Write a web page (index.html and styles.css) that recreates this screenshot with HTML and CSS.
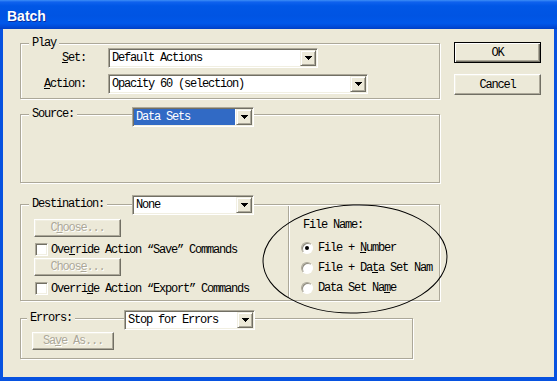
FILE: index.html
```html
<!DOCTYPE html>
<html>
<head>
<meta charset="utf-8">
<title>Batch</title>
<link rel="stylesheet" href="styles.css">
</head>
<body>
<div class="window">
  <div class="titlebar"><span class="title">Batch</span></div>
  <div class="client">
    <div class="main">
      <div class="group play">
        <div class="ghead"><span class="legend">Play</span></div>
        <div class="play-grid">
          <span class="flabel"><u>S</u>et:</span>
          <div class="combo w-set"><span class="ctext">Default Actions</span><span class="dd"><svg width="7" height="4" viewBox="0 0 7 4"><path d="M0 0h7v1H0zM1 1h5v1H1zM2 2h3v1H2zM3 3h1v1H3z"/></svg></span></div>
          <span class="flabel"><u>A</u>ction:</span>
          <div class="combo w-action"><span class="ctext">Opacity 60 (selection)</span><span class="dd"><svg width="7" height="4" viewBox="0 0 7 4"><path d="M0 0h7v1H0zM1 1h5v1H1zM2 2h3v1H2zM3 3h1v1H3z"/></svg></span></div>
        </div>
      </div>

      <div class="group source">
        <div class="ghead head-source">
          <span class="legend leg-source">Source:</span>
          <div class="combo w-src"><span class="ctext selected">Data Sets</span><span class="dd"><svg width="7" height="4" viewBox="0 0 7 4"><path d="M0 0h7v1H0zM1 1h5v1H1zM2 2h3v1H2zM3 3h1v1H3z"/></svg></span></div>
        </div>
      </div>

      <div class="group dest">
        <div class="ghead head-dest">
          <span class="legend leg-dest">Destination:</span>
          <div class="combo w-dest"><span class="ctext">None</span><span class="dd"><svg width="7" height="4" viewBox="0 0 7 4"><path d="M0 0h7v1H0zM1 1h5v1H1zM2 2h3v1H2zM3 3h1v1H3z"/></svg></span></div>
        </div>
        <div class="dest-body">
          <div class="dest-left">
            <div class="btn disabled w-choose first">C<u>h</u>oose...</div>
            <div class="check-row gap-a"><span class="checkbox"></span><span>Ove<u>r</u>ride Action “Save” Commands</span></div>
            <div class="btn disabled w-choose gap-b">Choos<u>e</u>...</div>
            <div class="check-row gap-a"><span class="checkbox"></span><span>Overri<u>d</u>e Action “Export” Commands</span></div>
          </div>
          <div class="dest-right">
            <div class="fn-label">File Name:</div>
            <div class="radio-row first"><span class="radio checked"></span><span>File + <u>N</u>umber</span></div>
            <div class="radio-row"><span class="radio"></span><span>File + Da<u>t</u>a Set Nam</span></div>
            <div class="radio-row"><span class="radio"></span><span>Data Set Na<u>m</u>e</span></div>
          </div>
        </div>
      </div>

      <div class="group errors">
        <div class="ghead head-err">
          <span class="legend leg-err">Errors:</span>
          <div class="combo w-err"><span class="ctext">Stop for Errors</span><span class="dd"><svg width="7" height="4" viewBox="0 0 7 4"><path d="M0 0h7v1H0zM1 1h5v1H1zM2 2h3v1H2zM3 3h1v1H3z"/></svg></span></div>
        </div>
        <div class="btn disabled w-save">Sa<u>v</u>e As...</div>
      </div>
    </div>

    <div class="side">
      <div class="btn default w-side">OK</div>
      <div class="btn w-side">Cancel</div>
    </div>

    <svg class="annot" width="192" height="114" viewBox="0 0 192 114">
      <ellipse cx="95" cy="57" rx="92" ry="54" fill="none" stroke="#000" stroke-width="1" transform="rotate(-2 95 57)"/>
    </svg>
  </div>
</div>
</body>
</html>
```

FILE: styles.css
```css
html, body {
  margin: 0;
  padding: 0;
}
body {
  width: 557px;
  height: 381px;
  overflow: hidden;
  font-family: "Liberation Mono", "DejaVu Sans Mono", monospace;
  font-size: 12px;
  letter-spacing: -1.2px;
  line-height: 12px;
  color: #000;
}
u { text-decoration: underline; text-underline-offset: 1px; }

.window {
  width: 557px;
  height: 381px;
  background: #0752E0;
  display: flex;
  flex-direction: column;
  box-sizing: border-box;
}
.titlebar {
  height: 29px;
  flex: none;
  box-sizing: border-box;
  padding: 3px 0 0 7px;
  display: flex;
  align-items: center;
  background: linear-gradient(to bottom, #3D8EF6 0%, #0F62EE 7%, #0057E6 20%, #0054E3 55%, #0058EA 80%, #0049D6 93%, #003FC4 100%);
}
.title {
  font: bold 14px "Liberation Sans", Arial, sans-serif;
  letter-spacing: 0;
  color: #fff;
  text-shadow: 1px 1px #0A2C9E;
}
.client {
  flex: 1;
  margin: 0 3px 4px 3px;
  background: #ECE9D8;
  display: flex;
  position: relative;
}
.main {
  margin-left: 17px;
  width: 420px;
  flex: none;
}
.side {
  margin-left: 14px;
  padding-top: 13px;
  display: flex;
  flex-direction: column;
  gap: 11px;
}

/* group boxes */
.group {
  box-sizing: border-box;
  border: 1px solid #ACA899;
  box-shadow: inset 1px 1px #fff, 1px 1px #fff;
}
.ghead {
  display: flex;
  align-items: flex-start;
}
.legend {
  background: #ECE9D8;
  padding: 0 3px;
  margin-left: 8px;
  line-height: 12px;
  white-space: nowrap;
}

.play {
  margin-top: 14px;
  height: 56px;
}
.play .ghead {
  height: 12px;
  margin-top: -7px;
}
.play-grid {
  display: grid;
  grid-template-columns: 65px auto;
  column-gap: 22px;
  row-gap: 6px;
  align-items: center;
  justify-items: start;
  margin-top: -1px;
}
.flabel {
  justify-self: end;
  white-space: nowrap;
}

.source {
  margin-top: 15px;
  height: 69px;
}
.head-source { margin-top: -8px; }
.leg-source { margin-top: 1px; }
.w-src { margin-left: 55px; width: 122px; }

.dest {
  margin-top: 21px;
  height: 97px;
  display: flex;
  flex-direction: column;
}
.head-dest { margin-top: -10px; }
.leg-dest { margin-top: 3px; }
.w-dest { margin-left: 25px; width: 122px; }

.dest-body {
  flex: 1;
  display: flex;
}
.dest-left {
  width: 267px;
  box-sizing: border-box;
  padding-left: 13px;
  display: flex;
  flex-direction: column;
  align-items: flex-start;
}
.dest-left .first { margin-top: 4px; }
.gap-a { margin-top: 6px; }
.gap-b { margin-top: 2px; }
.dest-right {
  flex: 1;
  margin-top: -9px;
  margin-bottom: 3px;
  border-left: 1px solid #ACA899;
  box-shadow: inset 1px 0 #fff;
  padding: 13px 0 0 12px;
}
.fn-label { margin-left: 2px; white-space: nowrap; }
.radio-row {
  display: flex;
  align-items: center;
  height: 13px;
  margin-top: 7px;
  white-space: nowrap;
}
.radio-row.first { margin-top: 10px; }
.radio {
  width: 12px;
  height: 12px;
  box-sizing: border-box;
  border-radius: 50%;
  background: #fff;
  border: 1px solid;
  border-color: #ACA899 #fff #fff #ACA899;
  box-shadow: inset 1px 1px #8F8C7E;
  margin-right: 5px;
  display: flex;
  align-items: center;
  justify-content: center;
  flex: none;
}
.radio.checked::after {
  content: "";
  width: 4px;
  height: 4px;
  border-radius: 50%;
  background: #000;
}

.errors {
  margin-top: 17px;
  width: 393px;
  height: 41px;
}
.head-err { margin-top: -9px; }
.leg-err { margin-top: 2px; margin-left: 6px; }
.w-err { margin-left: 49px; width: 131px; }

/* combo boxes */
.combo {
  box-sizing: border-box;
  height: 20px;
  padding: 1px;
  background: #fff;
  border: 1px solid;
  border-color: #ACA899 #fff #fff #ACA899;
  box-shadow: inset 1px 1px #716F64, inset -1px -1px #F1EFE2;
  display: flex;
  flex: none;
}
.w-set { width: 210px; }
.w-action { width: 260px; }
.ctext {
  flex: 1;
  padding-left: 2px;
  margin-right: 1px;
  line-height: 16px;
  white-space: nowrap;
  overflow: hidden;
}
.ctext.selected {
  background: #316AC5;
  color: #fff;
}
.dd {
  width: 16px;
  height: 16px;
  box-sizing: border-box;
  flex: none;
  background: #ECE9D8;
  border: 1px solid;
  border-color: #F1EFE2 #716F64 #716F64 #F1EFE2;
  box-shadow: inset 1px 1px #fff, inset -1px -1px #ACA899;
  display: flex;
  align-items: center;
  justify-content: center;
}
.dd svg { display: block; fill: #000; shape-rendering: crispEdges; }

/* buttons */
.btn {
  box-sizing: border-box;
  background: #ECE9D8;
  border: 1px solid;
  border-color: #fff #716F64 #716F64 #fff;
  box-shadow: inset -1px -1px #ACA899, inset 1px 1px #F1EFE2;
  display: flex;
  align-items: center;
  justify-content: center;
  white-space: nowrap;
  flex: none;
}
.btn.default {
  border: 1px solid #000;
  box-shadow: inset 1px 1px #fff, inset -1px -1px #716F64, inset -2px -2px #ACA899;
}
.btn.disabled {
  color: #ACA899;
  text-shadow: 1px 1px #fff;
}
.w-side { width: 87px; height: 21px; }
.w-choose { width: 87px; height: 18px; }
.w-save { width: 82px; height: 18px; margin: 2px 0 0 11px; }

/* checkboxes */
.check-row {
  display: flex;
  align-items: center;
  height: 13px;
  white-space: nowrap;
}
.checkbox {
  width: 13px;
  height: 13px;
  box-sizing: border-box;
  background: #fff;
  border: 1px solid;
  border-color: #ACA899 #fff #fff #ACA899;
  box-shadow: inset 1px 1px #716F64, inset -1px -1px #F1EFE2;
  margin: 0 3px 0 1px;
  flex: none;
}

/* hand-drawn annotation over the dialog */
.annot {
  position: absolute;
  left: 257px;
  top: 173px;
  pointer-events: none;
  overflow: visible;
}
```
